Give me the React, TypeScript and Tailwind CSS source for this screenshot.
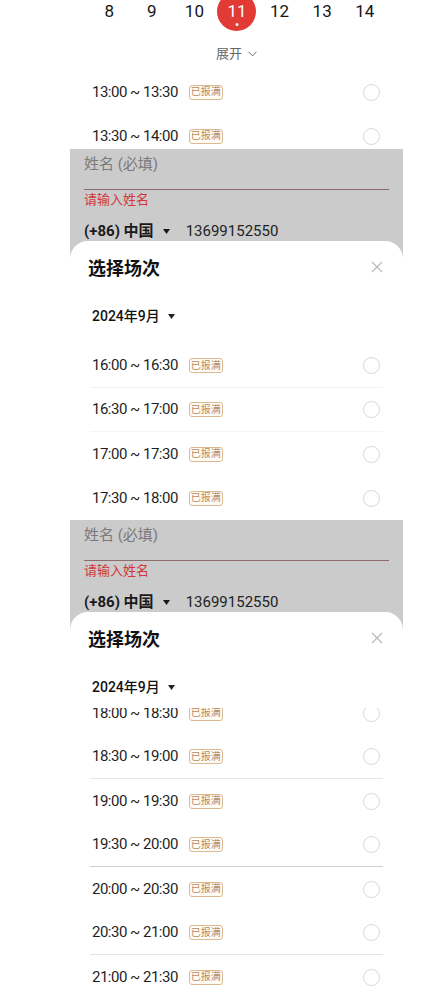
import React from 'react'

const DAYS = [8, 9, 10, 11, 12, 13, 14]

function Caret({ className = '' }: { className?: string }) {
  return (
    <svg width="7" height="5" viewBox="0 0 7 5" className={className}>
      <path d="M0 0 L7 0 L3.5 5 Z" fill="currentColor" />
    </svg>
  )
}

function SlotRow({ time, line = '' }: { time: string; line?: string }) {
  return (
    <div className={`h-[44px] flex items-center pl-[2px] pr-[3px] ${line}`}>
      <span className="text-[15px] text-[#1f1f1f] tracking-[-0.5px]">{time}</span>
      <span className="ml-[11px] h-[15px] px-[1px] flex items-center rounded-[3px] border border-[#dcb993] bg-[#fffbf5] text-[10px] leading-none text-[#b98a5c]">
        已报满
      </span>
      <span className="ml-auto w-[17px] h-[17px] rounded-full border border-[#d8d8d8]" />
    </div>
  )
}

function FormOverlay() {
  return (
    <div className="h-[92px] px-[14px] overflow-hidden">
      <div className="h-[41px] border-b border-[#8d6b6b]">
        <span className="text-[15px] leading-[30px] text-[#7a7a7a]">姓名 (必填)</span>
      </div>
      <div className="text-[13px] leading-[20px] text-[#d2353c]">请输入姓名</div>
      <div className="mt-[10px] h-[22px] flex items-center">
        <span className="text-[15px] font-bold text-[#1a1a1a]">(+86) 中国</span>
        <Caret className="ml-[9px] text-[#1a1a1a]" />
        <span className="ml-[16px] text-[15px] text-[#222]">13699152550</span>
      </div>
    </div>
  )
}

function SheetHeader() {
  return (
    <>
      <div className="h-[54px] flex items-center pl-[18px] pr-[20px]">
        <span className="text-[18px] font-bold text-[#111]">选择场次</span>
        <svg width="12" height="12" viewBox="0 0 12 12" className="ml-auto -mt-[3px]">
          <path d="M1 1 L11 11 M11 1 L1 11" stroke="#b8b8b8" strokeWidth="1.2" />
        </svg>
      </div>
      <div className="h-[42px] flex items-center pl-[22px]">
        <span className="text-[14px] font-medium text-[#111]">2024年9月</span>
        <Caret className="ml-[8px] text-[#222]" />
      </div>
    </>
  )
}

export default function App() {
  return (
    <div className="w-[442px] h-[1000px] overflow-hidden bg-white font-[Roboto,'Noto_Sans_CJK_SC',sans-serif]">
      {/* calendar strip */}
      <section className="h-[149px] overflow-hidden">
        <div className="ml-[70px] w-[333px]">
          <div className="-mt-[8px] ml-[18px] w-[298px] h-[39px] grid grid-cols-7">
            {DAYS.map((d) =>
              d === 11 ? (
                <div key={d} className="flex justify-center">
                  <div className="relative w-[39px] h-[39px] rounded-full bg-[#e23b35] text-white text-[17px] flex items-center justify-center">
                    11
                    <span className="absolute bottom-[5px] left-1/2 -translate-x-1/2 w-[3px] h-[3px] rounded-full bg-white" />
                  </div>
                </div>
              ) : (
                <div key={d} className="flex items-center justify-center text-[17px] text-[#151515]">
                  {d}
                </div>
              )
            )}
          </div>
          <div className="mt-[13px] h-[20px] flex items-center justify-center gap-[6px] text-[13px] text-[#666]">
            <span>展开</span>
            <svg width="9" height="6" viewBox="0 0 9 6">
              <path d="M0.5 0.8 L4.5 4.8 L8.5 0.8" fill="none" stroke="#666" strokeWidth="1" />
            </svg>
          </div>
          <div className="mt-[6px] ml-[20px] w-[293px]">
            <SlotRow time="13:00 ~ 13:30" />
            <SlotRow time="13:30 ~ 14:00" />
          </div>
        </div>
      </section>

      {/* first sheet */}
      <section className="h-[371px] overflow-hidden">
        <div className="ml-[70px] w-[333px] h-full bg-[#cbcbcb] flex flex-col">
          <FormOverlay />
          <div className="flex-1 bg-white rounded-t-[18px]">
            <SheetHeader />
            <div className="pt-[7px] ml-[20px] w-[293px]">
              <SlotRow time="16:00 ~ 16:30" line="border-b border-[#f2f2f2]" />
              <SlotRow time="16:30 ~ 17:00" line="border-b border-[#f4f4f4]" />
              <SlotRow time="17:00 ~ 17:30" />
              <SlotRow time="17:30 ~ 18:00" />
            </div>
          </div>
        </div>
      </section>

      {/* second sheet, scrolled */}
      <section className="h-[480px] overflow-hidden">
        <div className="ml-[70px] w-[333px] h-full bg-[#cbcbcb] flex flex-col">
          <FormOverlay />
          <div className="flex-1 bg-white rounded-t-[18px] flex flex-col">
            <SheetHeader />
            <div className="flex-1 overflow-hidden ml-[20px] w-[293px]">
              <div className="-mt-[17px]">
                <SlotRow time="18:00 ~ 18:30" />
                <SlotRow time="18:30 ~ 19:00" line="border-b border-[#e6e6e6]" />
                <SlotRow time="19:00 ~ 19:30" />
                <SlotRow time="19:30 ~ 20:00" line="border-b border-[#cfcfcf]" />
                <SlotRow time="20:00 ~ 20:30" />
                <SlotRow time="20:30 ~ 21:00" line="border-b border-[#e4e4e4]" />
                <SlotRow time="21:00 ~ 21:30" />
              </div>
            </div>
          </div>
        </div>
      </section>
    </div>
  )
}
